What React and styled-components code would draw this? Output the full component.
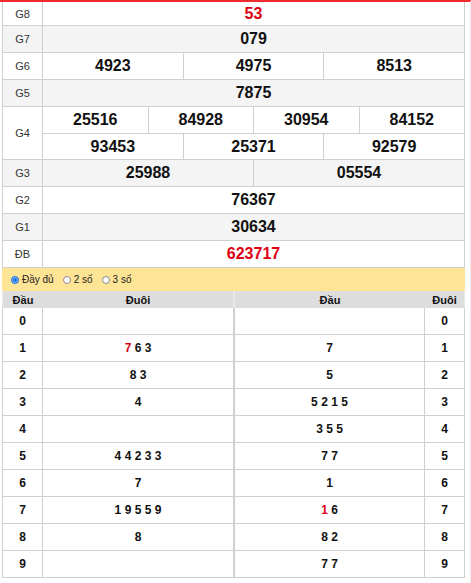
import React from 'react';
import styled, { createGlobalStyle } from 'styled-components';

const Global = createGlobalStyle`
  html, body { margin: 0; padding: 0; background: #fff; }
  body { font-family: "Liberation Sans", Arial, sans-serif; }
  * { box-sizing: border-box; }
`;

const Page = styled.div`
  width: 471px;
  min-height: 583px;
  border-top: 2px solid #ee2a2f;
  border-right: 1px solid #ececec;
  padding-left: 2px;
`;

const Board = styled.div`
  width: 463px;
  border-left: 1px solid #d0d0d0;
  border-right: 1px solid #d0d0d0;
`;

const PrizeRow = styled.div`
  display: grid;
  grid-template-columns: 40px 1fr;
  background: ${p => (p.$shade ? '#f4f4f4' : '#fff')};
  border-bottom: 1px solid #d0d0d0;
`;

const Label = styled.div`
  display: flex;
  align-items: center;
  justify-content: center;
  border-right: 1px solid #d0d0d0;
  font-size: 11px;
  color: #333;
`;

const Content = styled.div`
  display: flex;
  flex-direction: column;
`;

const SubRow = styled.div`
  display: flex;
  height: ${p => (p.$short ? '23px' : '26px')};
  & + & { border-top: 1px solid #d0d0d0; }
`;

const Cell = styled.div`
  flex: 1 1 0;
  display: flex;
  align-items: center;
  justify-content: center;
  font-size: 16px;
  font-weight: bold;
  color: ${p => (p.$red ? '#dd0011' : '#111')};
  & + & { border-left: 1px solid #d0d0d0; }
`;

const RadioBar = styled.div`
  width: 463px;
  height: 23px;
  background: #fee595;
  display: flex;
  align-items: center;
  padding-left: 9px;
  gap: 9px;
`;

const RadioItem = styled.label`
  display: flex;
  align-items: center;
  gap: 3px;
  font-size: 10px;
  color: #222;
`;

const Dot = styled.span`
  width: 8px;
  height: 8px;
  border-radius: 50%;
  border: 1px solid ${p => (p.$on ? '#1a73e8' : '#8a8a8a')};
  background: ${p => (p.$on ? '#1a73e8' : '#fff')};
  box-shadow: ${p => (p.$on ? 'inset 0 0 0 1px #9cc2f5' : 'none')};
`;

const LotoWrap = styled.div`
  display: flex;
  width: 463px;
`;

const LotoTable = styled.div`
  width: ${p => p.$w}px;
  display: flex;
  flex-direction: column;
`;

const LotoRow = styled.div`
  display: grid;
  grid-template-columns: ${p => p.$cols};
  height: ${p => (p.$head ? '17px' : '27px')};
  background: ${p => (p.$head ? '#dddddd' : '#fff')};
  border-left: 1px solid ${p => (p.$head ? '#e9e9e9' : '#d0d0d0')};
  border-right: 1px solid ${p => (p.$head ? '#e9e9e9' : '#d0d0d0')};
  border-bottom: ${p => (p.$head ? 'none' : '1px solid #d0d0d0')};
`;

const LotoCell = styled.div`
  display: flex;
  align-items: center;
  justify-content: center;
  font-size: ${p => (p.$head ? '11px' : '12px')};
  font-weight: bold;
  color: #111;
  border-right: ${p => (p.$sep && !p.$head ? '1px solid #d0d0d0' : 'none')};
`;

const DigitLine = styled.span`
  white-space: pre;
`;

const Red = styled.span`
  color: #dd0011;
`;

const prizes = [
  { label: 'G8', rows: [['53']], red: true, short: true },
  { label: 'G7', rows: [['079']] },
  { label: 'G6', rows: [['4923', '4975', '8513']] },
  { label: 'G5', rows: [['7875']] },
  { label: 'G4', rows: [['25516', '84928', '30954', '84152'], ['93453', '25371', '92579']] },
  { label: 'G3', rows: [['25988', '05554']] },
  { label: 'G2', rows: [['76367']] },
  { label: 'G1', rows: [['30634']] },
  { label: 'ĐB', rows: [['623717']], red: true },
];

const left = [
  [],
  ['7*', '6', '3'],
  ['8', '3'],
  ['4'],
  [],
  ['4', '4', '2', '3', '3'],
  ['7'],
  ['1', '9', '5', '5', '9'],
  ['8'],
  [],
];

const right = [
  [],
  ['7'],
  ['5'],
  ['5', '2', '1', '5'],
  ['3', '5', '5'],
  ['7', '7'],
  ['1'],
  ['1*', '6'],
  ['8', '2'],
  ['7', '7'],
];

function Digits({ list }) {
  return (
    <DigitLine>
      {list.map((d, i) => {
        const red = d.endsWith('*');
        const v = red ? d.slice(0, -1) : d;
        return (
          <React.Fragment key={i}>
            {i > 0 ? ' ' : ''}
            {red ? <Red>{v}</Red> : v}
          </React.Fragment>
        );
      })}
    </DigitLine>
  );
}

export default function App() {
  return (
    <>
      <Global />
      <Page>
        <Board>
          {prizes.map((p, i) => (
            <PrizeRow key={p.label} $shade={i % 2 === 1}>
              <Label>{p.label}</Label>
              <Content>
                {p.rows.map((r, j) => (
                  <SubRow key={j} $short={p.short}>
                    {r.map(n => (
                      <Cell key={n} $red={p.red}>{n}</Cell>
                    ))}
                  </SubRow>
                ))}
              </Content>
            </PrizeRow>
          ))}
        </Board>
        <RadioBar>
          <RadioItem><Dot $on />Đầy đủ</RadioItem>
          <RadioItem><Dot />2 số</RadioItem>
          <RadioItem><Dot />3 số</RadioItem>
        </RadioBar>
        <LotoWrap>
          <LotoTable $w={232}>
            <LotoRow $head $cols="40px 1fr">
              <LotoCell $head>Đầu</LotoCell>
              <LotoCell $head>Đuôi</LotoCell>
            </LotoRow>
            {left.map((l, i) => (
              <LotoRow key={i} $cols="40px 1fr">
                <LotoCell $sep>{i}</LotoCell>
                <LotoCell><Digits list={l} /></LotoCell>
              </LotoRow>
            ))}
          </LotoTable>
          <LotoTable $w={231}>
            <LotoRow $head $cols="190px 1fr">
              <LotoCell $head>Đầu</LotoCell>
              <LotoCell $head>Đuôi</LotoCell>
            </LotoRow>
            {right.map((l, i) => (
              <LotoRow key={i} $cols="190px 1fr">
                <LotoCell $sep><Digits list={l} /></LotoCell>
                <LotoCell>{i}</LotoCell>
              </LotoRow>
            ))}
          </LotoTable>
        </LotoWrap>
      </Page>
    </>
  );
}
